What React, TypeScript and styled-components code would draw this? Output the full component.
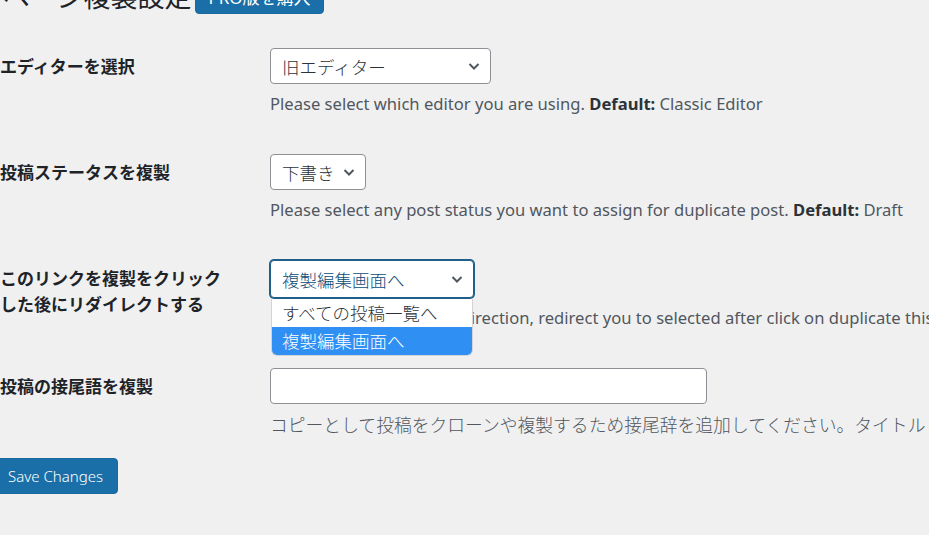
import styled, { createGlobalStyle } from "styled-components";

const GlobalStyle = createGlobalStyle`
  html, body {
    margin: 0;
    padding: 0;
    background: #f0f0f1;
  }
  body {
    font-family: "Noto Sans", "Noto Sans CJK JP", sans-serif;
    color: #1d2327;
    overflow: hidden;
  }
`;

const Page = styled.div`
  width: 929px;
  height: 535px;
  overflow: hidden;
`;

const Header = styled.div`
  display: flex;
  align-items: center;
  gap: 4px;
  height: 36px;
  margin-top: -22px;
`;

const Title = styled.h1`
  margin: 0;
  padding-left: 3px;
  font-family: "Noto Sans CJK JP", sans-serif;
  font-size: 27px;
  font-weight: 400;
  line-height: 36px;
  color: #1d2327;
`;

const BlueButton = styled.button`
  display: inline-flex;
  align-items: center;
  height: 36px;
  padding: 0 12px;
  border: 1px solid #19699e;
  border-radius: 4px;
  background: #1b6fa8;
  color: #fff;
  font-family: "Noto Sans", "Noto Sans CJK JP", sans-serif;
  font-size: 17px;
  cursor: pointer;
`;

const SaveButton = styled(BlueButton)`
  margin-left: -8px;
  padding: 0 14px 0 15px;
  font-size: 15px;
  font-weight: 300;
`;

const Form = styled.div`
  margin-top: 15px;
`;

const Row = styled.div`
  display: flex;
  padding: 19px 0;
`;

const Label = styled.div`
  width: 228px;
  flex: 0 0 228px;
  margin-top: 5px;
  margin-right: 42px;
  font-family: "Noto Sans CJK JP", sans-serif;
  font-size: 17px;
  font-weight: 700;
  line-height: 26px;
  color: #1d2327;
`;

const Field = styled.div`
  display: flex;
  flex-direction: column;
  align-items: flex-start;
  white-space: nowrap;
`;

const SelectWrap = styled.div`
  position: relative;
`;

const SelectBox = styled.div<{ $width: number; $focused?: boolean }>`
  box-sizing: border-box;
  display: flex;
  align-items: center;
  justify-content: space-between;
  width: ${(p) => p.$width}px;
  height: ${(p) => (p.$focused ? 38 : 36)}px;
  padding: 0 9px 0 11px;
  background: #fff;
  border: 1px solid ${(p) => (p.$focused ? "#1f5f8a" : "#8c8f94")};
  box-shadow: ${(p) => (p.$focused ? "0 0 0 1px #1f5f8a" : "none")};
  border-radius: 4px;
  font-family: "Noto Sans CJK JP", sans-serif;
  font-size: 17.5px;
  font-weight: 300;
  color: ${(p) => (p.$focused ? "#0a4b78" : "#2c3338")};
`;

const Chevron = styled.svg`
  width: 14px;
  height: 14px;
  flex: 0 0 auto;
`;

const Menu = styled.div`
  position: absolute;
  left: 1px;
  right: 1px;
  top: 39px;
  background: #fff;
  border: 1px solid #d4d4d6;
  border-top: none;
  border-radius: 0 0 6px 6px;
  overflow: hidden;
  z-index: 2;
`;

const Option = styled.div<{ $active?: boolean }>`
  height: 28px;
  padding: 0 10px;
  font-family: "Noto Sans CJK JP", sans-serif;
  font-size: 17.5px;
  font-weight: 300;
  line-height: 28px;
  background: ${(p) => (p.$active ? "#2f8ff3" : "#fff")};
  color: ${(p) => (p.$active ? "#fff" : "#2c3338")};
`;

const TextInput = styled.input`
  box-sizing: border-box;
  width: 437px;
  height: 36px;
  padding: 0 10px;
  background: #fff;
  border: 1px solid #8c8f94;
  border-radius: 4px;
  font-size: 17px;
  outline: none;
`;

const Description = styled.p<{ $cjk?: boolean }>`
  margin: 8px 0 0;
  font-family: ${(p) =>
    p.$cjk ? `"Noto Sans CJK JP", sans-serif` : `"Noto Sans", "Noto Sans CJK JP", sans-serif`};
  font-size: ${(p) => (p.$cjk ? 17.8 : 16.6)}px;
  font-weight: ${(p) => (p.$cjk ? 300 : 400)};
  line-height: 24px;
  color: #50575e;

  strong {
    font-weight: 700;
    color: #2c3338;
  }
`;

const Submit = styled.div`
  padding-top: 3px;
`;

function Select({
  value,
  width,
  focused,
  options,
}: {
  value: string;
  width: number;
  focused?: boolean;
  options?: string[];
}) {
  return (
    <SelectWrap>
      <SelectBox $width={width} $focused={focused}>
        <span>{value}</span>
        <Chevron viewBox="0 0 14 14">
          <path d="M2.5 5l4.5 4.5 4.5-4.5" fill="none" stroke="#50575e" strokeWidth="2" />
        </Chevron>
      </SelectBox>
      {options && (
        <Menu>
          {options.map((o) => (
            <Option key={o} $active={o === value}>
              {o}
            </Option>
          ))}
        </Menu>
      )}
    </SelectWrap>
  );
}

export default function App() {
  return (
    <Page>
      <GlobalStyle />
      <Header>
        <Title>ページ複製設定</Title>
        <BlueButton>PRO版を購入</BlueButton>
      </Header>
      <Form>
        <Row>
          <Label>エディターを選択</Label>
          <Field>
            <Select value="旧エディター" width={221} />
            <Description>
              Please select which editor you are using. <strong>Default:</strong> Classic Editor
            </Description>
          </Field>
        </Row>
        <Row>
          <Label>投稿ステータスを複製</Label>
          <Field>
            <Select value="下書き" width={96} />
            <Description>
              Please select any post status you want to assign for duplicate post.{" "}
              <strong>Default:</strong> Draft
            </Description>
          </Field>
        </Row>
        <Row>
          <Label>このリンクを複製をクリックした後にリダイレクトする</Label>
          <Field>
            <Select
              value="複製編集画面へ"
              width={204}
              focused
              options={["すべての投稿一覧へ", "複製編集画面へ"]}
            />
            <Description>
              Please select any post redirection, redirect you to selected after click on duplicate
              this link. <strong>Default:</strong> To current list.
            </Description>
          </Field>
        </Row>
        <Row>
          <Label>投稿の接尾語を複製</Label>
          <Field>
            <TextInput type="text" />
            <Description $cjk>
              コピーとして投稿をクローンや複製するため接尾辞を追加してください。タイトルとパーマリンクの後に表示されます。
            </Description>
          </Field>
        </Row>
      </Form>
      <Submit>
        <SaveButton>Save Changes</SaveButton>
      </Submit>
    </Page>
  );
}
